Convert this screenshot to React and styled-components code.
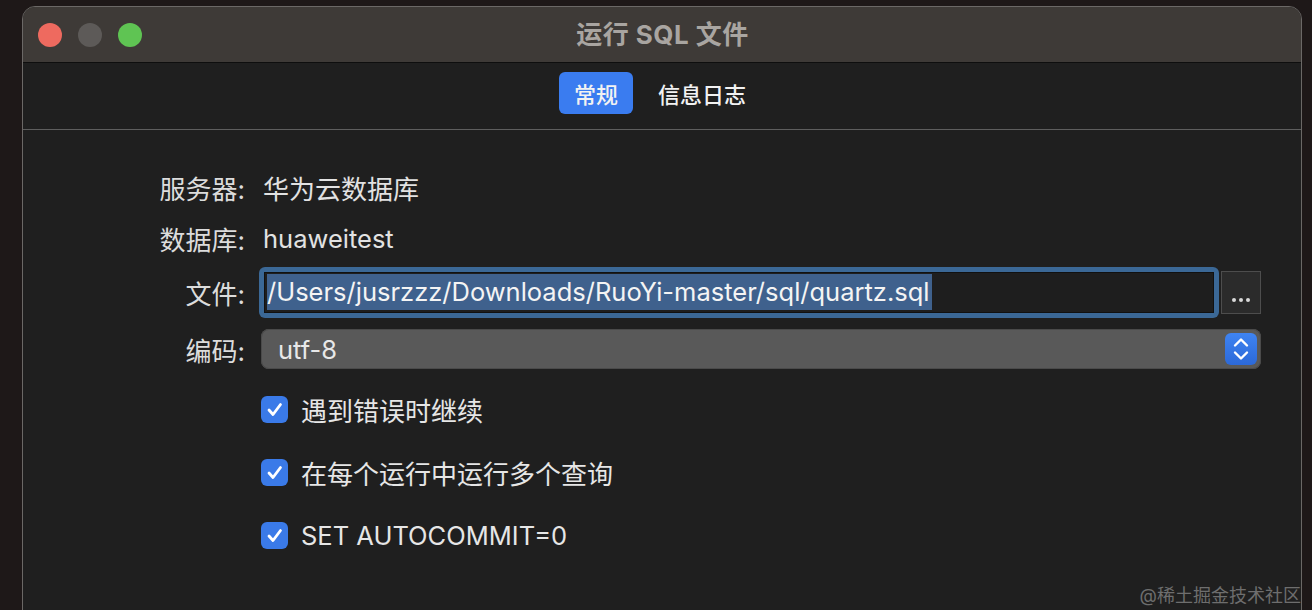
import styled, { createGlobalStyle } from "styled-components";

const GlobalStyle = createGlobalStyle`
  html, body {
    margin: 0;
    padding: 0;
    background: #1e1818;
    overflow: hidden;
    height: 610px;
  }
  body {
    font-family: Inter, "Noto Sans CJK SC", sans-serif;
  }
`;

export default function App() {
  return (
    <>
      <GlobalStyle />
      <Screen>
        <Window>
          <TitleBar>
            <Lights>
              <Light color="#ee6a5f" />
              <Light color="#5d5a58" />
              <Light color="#5fc453" />
            </Lights>
            <Title>运行 SQL 文件</Title>
          </TitleBar>
          <TabBar>
            <Tab active>常规</Tab>
            <Tab>信息日志</Tab>
          </TabBar>
          <Form>
            <Row height={50}>
              <Label>服务器:</Label>
              <Value>华为云数据库</Value>
            </Row>
            <Row height={52}>
              <Label>数据库:</Label>
              <Value latin>huaweitest</Value>
            </Row>
            <Row height={56}>
              <Label>文件:</Label>
              <FileField>
                <FileInput>
                  <Selected>/Users/jusrzzz/Downloads/RuoYi-master/sql/quartz.sql</Selected>
                </FileInput>
              </FileField>
              <BrowseButton>
                <Dots>
                  <i />
                  <i />
                  <i />
                </Dots>
              </BrowseButton>
            </Row>
            <Row height={58}>
              <Label>编码:</Label>
              <Select>
                <span>utf-8</span>
                <Stepper>
                  <svg width="18" height="26" viewBox="0 0 18 26" fill="none">
                    <path d="M3 9.5 L9 3.5 L15 9.5" stroke="#fff" strokeWidth="2.4" strokeLinecap="round" strokeLinejoin="round" />
                    <path d="M3 16.5 L9 22.5 L15 16.5" stroke="#fff" strokeWidth="2.4" strokeLinecap="round" strokeLinejoin="round" />
                  </svg>
                </Stepper>
              </Select>
            </Row>
            <Checks>
              <Check>
                <Box>
                  <CheckMark />
                </Box>
                遇到错误时继续
              </Check>
              <Check>
                <Box>
                  <CheckMark />
                </Box>
                在每个运行中运行多个查询
              </Check>
              <Check latin>
                <Box>
                  <CheckMark />
                </Box>
                SET AUTOCOMMIT=0
              </Check>
            </Checks>
          </Form>
          <Watermark>@稀土掘金技术社区</Watermark>
        </Window>
      </Screen>
    </>
  );
}

function CheckMark() {
  return (
    <svg width="19" height="19" viewBox="0 0 19 19" fill="none">
      <path d="M4 10 L8 14.5 L15.5 4.5" stroke="#fff" strokeWidth="2.8" strokeLinecap="round" strokeLinejoin="round" />
    </svg>
  );
}

const Screen = styled.div`
  padding: 6px 10px 0 22px;
  height: 604px;
  overflow: hidden;
`;

const Window = styled.div`
  position: relative;
  width: 1280px;
  height: 640px;
  box-sizing: border-box;
  border: 1px solid #6b6866;
  border-radius: 13px 13px 0 0;
  background: #1f1f1f;
  overflow: hidden;
`;

const TitleBar = styled.div`
  height: 56px;
  box-sizing: border-box;
  padding-bottom: 4px;
  background: #3e3a37;
  border-bottom: 1px solid #0e0e0e;
  display: flex;
  align-items: center;
  justify-content: center;
  position: relative;
`;

const Lights = styled.div`
  position: absolute;
  left: 15px;
  top: 16px;
  display: flex;
  gap: 16px;
`;

const Light = styled.span`
  width: 24px;
  height: 24px;
  border-radius: 50%;
  background: ${(p) => p.color};
`;

const Title = styled.div`
  color: #a9a5a1;
  font-size: 26px;
  font-weight: 700;
  letter-spacing: 0.5px;
  margin-left: 1px;
`;

const TabBar = styled.div`
  height: 67px;
  box-sizing: border-box;
  padding: 0 4px 6px 0;
  border-bottom: 1px solid #5e5e5e;
  display: flex;
  align-items: center;
  justify-content: center;
  gap: 10px;
`;

const Tab = styled.div`
  height: 42px;
  padding: 0 15px;
  display: flex;
  align-items: center;
  border-radius: 6px;
  font-size: 22px;
  font-weight: 500;
  color: #f2f2f2;
  background: ${(p) => (p.active ? "#3a7cf0" : "transparent")};
`;

const Form = styled.div`
  padding: 32px 40px 0 0;
  display: flex;
  flex-direction: column;
`;

const Row = styled.div`
  height: ${(p) => p.height}px;
  display: flex;
  align-items: center;
`;

const Label = styled.div`
  width: 222px;
  text-align: right;
  font-size: 26px;
  color: #dcdcdc;
  margin-right: 18px;
`;

const Value = styled.div`
  font-size: ${(p) => (p.latin ? "25.5px" : "26px")};
  color: #e2e2e2;
`;

const FileField = styled.div`
  flex: 1;
  height: 51px;
  box-sizing: border-box;
  border-radius: 6px;
  background: #3b6896;
  padding: 5px;
  margin-left: -4px;
`;

const FileInput = styled.div`
  height: 100%;
  box-sizing: border-box;
  background: #1e1e1e;
  border: 1px solid #111;
  display: flex;
  align-items: center;
  padding-left: 2px;
`;

const Selected = styled.span`
  background: #3f618d;
  color: #f4f4f4;
  font-size: 25.5px;
  line-height: 36px;
  padding-right: 2px;
`;

const BrowseButton = styled.div`
  width: 40px;
  height: 43px;
  margin-left: 2px;
  box-sizing: border-box;
  background: #2b2b2b;
  border: 1px solid #4d4d4d;
  display: flex;
  align-items: flex-end;
  justify-content: center;
  padding-bottom: 11px;
`;

const Dots = styled.div`
  display: flex;
  gap: 3px;
  i {
    width: 4px;
    height: 4px;
    border-radius: 50%;
    background: #d9d9d9;
  }
`;

const Select = styled.div`
  flex: 1;
  height: 40px;
  margin-left: -2px;
  border-radius: 8px;
  background: #595959;
  box-shadow: inset 0 0 0 1px #4a4a4a;
  display: flex;
  align-items: center;
  justify-content: space-between;
  padding: 0 4px 0 17px;
  font-size: 25.5px;
  color: #e8e8e8;
`;

const Stepper = styled.div`
  width: 32px;
  height: 32px;
  border-radius: 6px;
  background: linear-gradient(#3f84f2, #2c69d8);
  display: flex;
  align-items: center;
  justify-content: center;
`;

const Checks = styled.div`
  padding-left: 238px;
  padding-top: 17px;
  display: flex;
  flex-direction: column;
  gap: 35px;
`;

const Check = styled.div`
  display: flex;
  align-items: center;
  gap: 13px;
  height: 28px;
  font-size: ${(p) => (p.latin ? "25.5px" : "26px")};
  color: #e6e6e6;
`;

const Box = styled.span`
  width: 27px;
  height: 27px;
  border-radius: 6px;
  background: #3a7ae8;
  display: flex;
  align-items: center;
  justify-content: center;
`;

const Watermark = styled.div`
  position: absolute;
  right: 0;
  top: 574px;
  font-size: 18px;
  color: #6e6e6e;
`;
